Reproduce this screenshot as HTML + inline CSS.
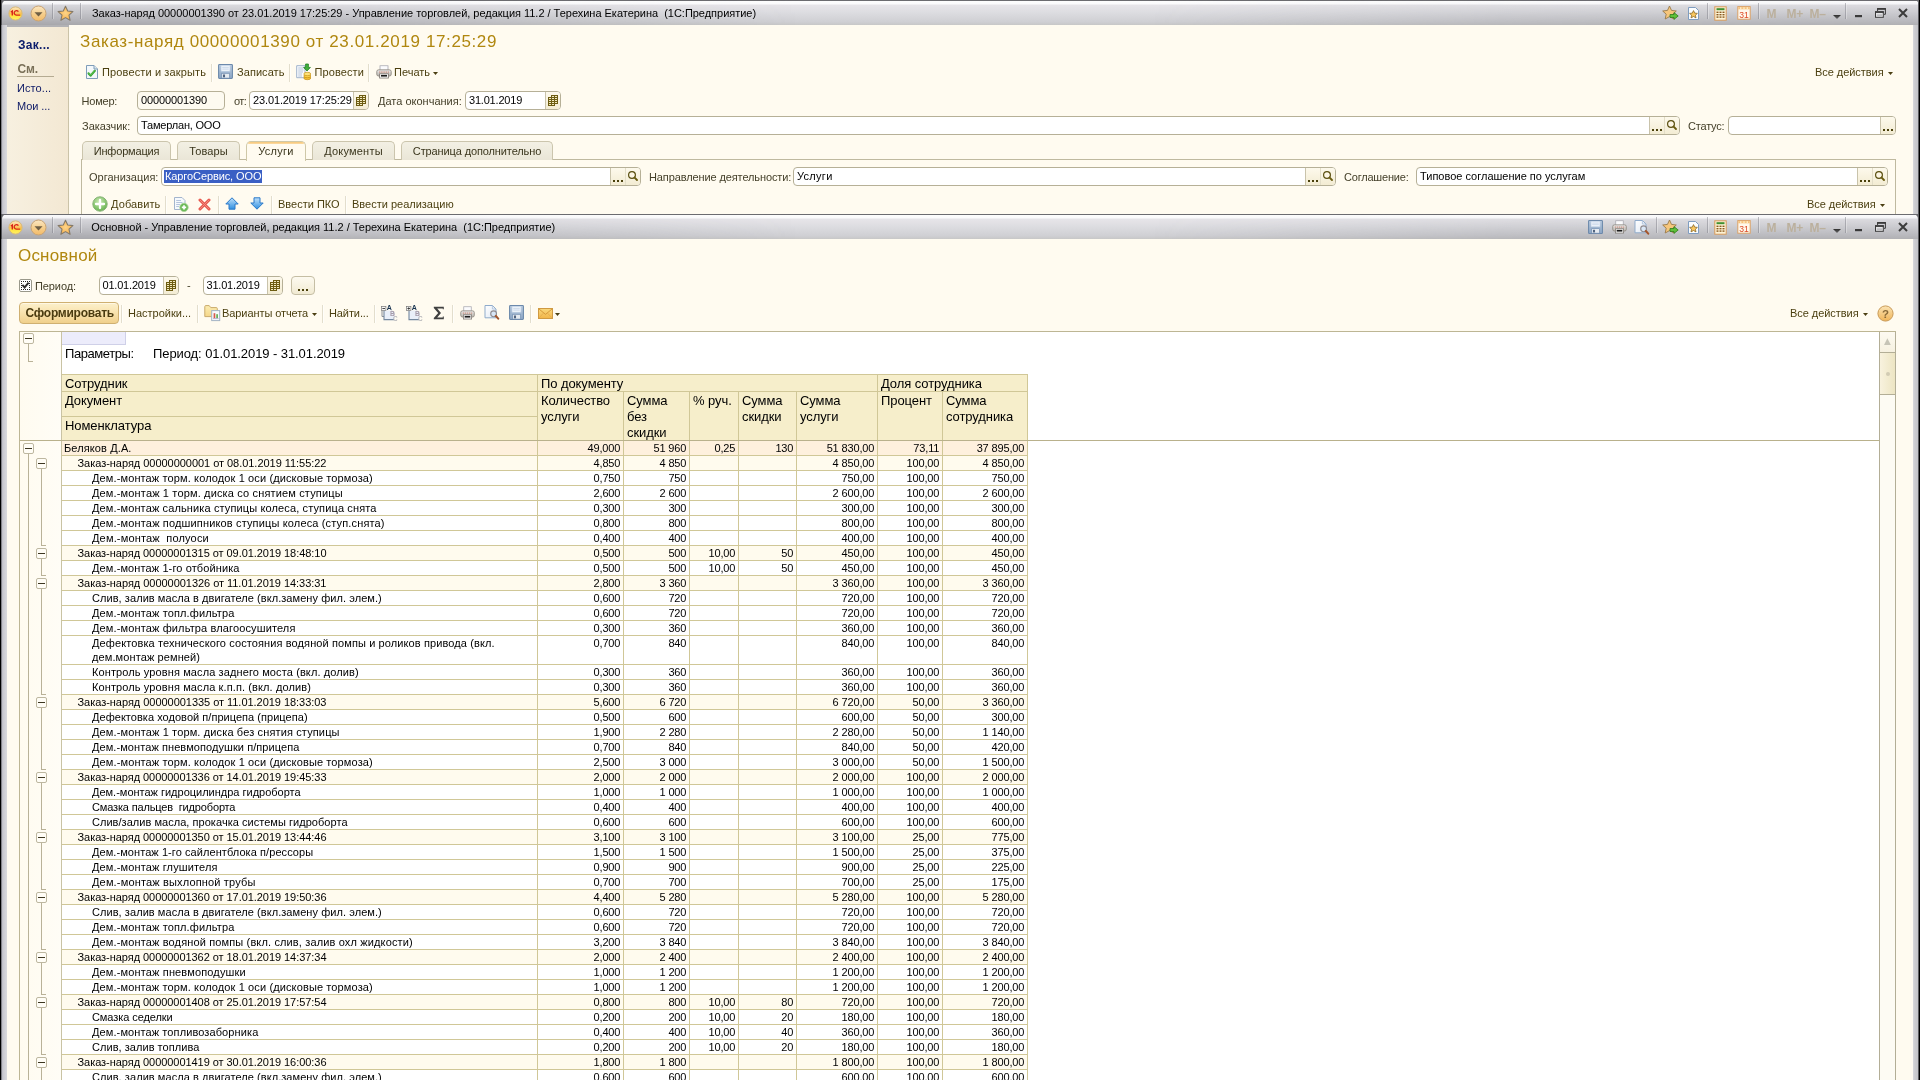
<!DOCTYPE html>
<html lang="ru"><head><meta charset="utf-8"><title>1C</title>
<style>
*{box-sizing:border-box;margin:0;padding:0}
html,body{width:1920px;height:1080px;overflow:hidden;background:#fffbf0}
body{font-family:"Liberation Sans",sans-serif;font-size:11px;color:#000;position:relative;line-height:13px}
.a{position:absolute}
.a svg{display:block}
span.a{white-space:pre}
/* window chrome */
.tb{position:absolute;left:0;width:1920px;height:25px;background:linear-gradient(#6c6c70 0,#6c6c70 1px,#fdfdfd 1px,#fbfbfc 4px,#e7e5e9 5px,#dcdce0 13px,#cfcfd3 22px,#c7c7c7 25px)}
.tb:after{content:"";position:absolute;left:0;top:0;width:1920px;height:25px;background:linear-gradient(#6c6c70 0,#6c6c70 1px,#f9f9fb 1px,#f2f2f5 4px,#d3d3d8 5px,#bebec3 13px,#a6a6ab 22px,#a0a0a5 25px);-webkit-mask-image:linear-gradient(90deg,rgba(0,0,0,.85) 0,rgba(0,0,0,.75) 150px,rgba(0,0,0,.4) 450px,rgba(0,0,0,0) 800px,rgba(0,0,0,0) 1150px,rgba(0,0,0,.4) 1500px,rgba(0,0,0,.6) 1920px);mask-image:linear-gradient(90deg,rgba(0,0,0,.85) 0,rgba(0,0,0,.75) 150px,rgba(0,0,0,.4) 450px,rgba(0,0,0,0) 800px,rgba(0,0,0,0) 1150px,rgba(0,0,0,.4) 1500px,rgba(0,0,0,.6) 1920px)}
.tbt{position:absolute;left:92px;font-size:11px;color:#000;white-space:pre;letter-spacing:-.02px}
.tsep{position:absolute;width:1px;height:16px;background:rgba(120,120,128,.45);box-shadow:1px 0 0 rgba(255,255,255,.3)}
.gm{position:absolute;font-weight:bold;font-size:12px;color:#bbb09d;white-space:pre;letter-spacing:-.3px}
/* text */
.ut{color:#4b3f10}
.lb{color:#45402a}
.big{position:absolute;font-size:17px;line-height:20px;color:#b0870f;white-space:pre}
.sep{position:absolute;width:1px;height:18px;background:#e3decd;box-shadow:1px 0 0 #fffefa}
/* inputs */
.in{position:absolute;height:19px;background:#fff;border:1px solid #b6b097;border-radius:4px;overflow:hidden}
.in .tx{position:absolute;left:3px;top:2px;white-space:pre;color:#000}
.in .bt{position:absolute;top:0;bottom:0;width:15px;border-left:1px solid #c9c3ab;background:linear-gradient(#fdf9ec,#f3ecd3)}
.in .bt svg{position:absolute}
.in .b2{border-left-color:#e3dec8}
/* tabs */
.tab{position:absolute;top:141px;height:19px;border:1px solid #cbc5ad;border-bottom:none;border-radius:5px 5px 0 0;background:linear-gradient(#f3f0e4,#eae6d7);color:#3a351c;text-align:center;line-height:18px;white-space:pre}
.tab.sel{top:141px;height:20px;background:#fffbf0;border-color:#cfc8a8;z-index:3;line-height:18px}
.tab.sel:before{content:"";position:absolute;left:1px;right:1px;top:0;height:2px;background:linear-gradient(#f7c677,#fbdca6);border-radius:3px 3px 0 0}
/* report */
.row{position:absolute;left:62px;width:965px;border-bottom:1px solid #d0c797;font-size:11px;line-height:13px}
.row span{position:absolute;top:1px;white-space:pre}
.r0{background:#fef0dd}
.r1{background:#fffbee}
.r2{background:#fff}
.t0{letter-spacing:.05px}
.t1{letter-spacing:-.04px}
.t2{letter-spacing:.12px}
.n{letter-spacing:-.14px}
.cv{position:absolute;top:375px;width:1px;background:#d0c797}
.hd{position:absolute;font-size:13px;line-height:16px;color:#000;white-space:pre;letter-spacing:-.08px}
.bx{position:absolute;width:11px;height:11px;border:1px solid #bdb7a0;border-radius:2px;background:#fffdf6}
.bx:after{content:"";position:absolute;left:1px;top:4px;width:7px;height:1px;background:#3c3620}
.vl{position:absolute;width:1px;background:#b9b298}
.hl{position:absolute;height:1px;background:#b9b298}
#root{position:absolute;left:0;top:0;width:1920px;height:1080px;will-change:transform;overflow:hidden}
</style></head><body><div id="root">

<!-- ================= WINDOW 1 ================= -->
<div class="a" style="left:0;top:0;width:1920px;height:214px;background:#fffbf0"></div>
<div class="tb" style="top:0"></div>
<div class="a" style="left:69px;top:25px;width:1844px;height:189px;background:#fffbf0"></div>
<!-- left frame & panel -->
<div class="a" style="left:0;top:25px;width:7px;height:189px;background:linear-gradient(90deg,#000 0,#000 1px,#4a4a50 1px,#b9b9c1 2px,#c9c9d0 3px,#dadade 7px)"></div>
<div class="a" style="left:0;top:0;width:2px;height:25px;background:linear-gradient(90deg,#000 0,#000 1px,#55555a 1px,#55555a 2px)"></div>
<div class="a" style="left:7px;top:25px;width:62px;height:2px;background:#b2b2b5"></div>
<div class="a" style="left:7px;top:27px;width:61px;height:187px;background:linear-gradient(90deg,#f7f0e0,#f3e8d3)"></div>
<div class="a" style="left:68px;top:27px;width:1px;height:187px;background:#cbc3a8"></div>
<!-- right frame -->
<div class="a" style="left:1913px;top:25px;width:7px;height:189px;background:linear-gradient(90deg,#d8d8dc 0,#cbcbcf 2px,#c4c4c8 5px,#5c5c60 5px,#5c5c60 6px,#000 6px)"></div>
<div class="a" style="left:1918px;top:0;width:2px;height:25px;background:linear-gradient(90deg,#5c5c60 0,#5c5c60 1px,#000 1px)"></div>
<svg class="a" style="left:2px;top:0" width="5" height="5"><path d="M0 0 H5 A5 5 0 0 0 0 5 Z" fill="#6c6c70"/></svg>
<svg class="a" style="left:1914px;top:0" width="5" height="5"><path d="M5 0 H0 A5 5 0 0 1 5 5 Z" fill="#6c6c70"/></svg>

<!-- title bar 1 -->
<div class="a" style="left:8px;top:6px"><svg width="15" height="15" viewBox="0 0 15 15"><defs><linearGradient id="g1c" x1="0" y1="0" x2="0" y2="1"><stop offset="0" stop-color="#fde9c4"/><stop offset=".5" stop-color="#fbc252"/><stop offset=".62" stop-color="#ffe23c"/><stop offset="1" stop-color="#fff266"/></linearGradient></defs>
<circle cx="7.5" cy="7.5" r="6.6" fill="url(#g1c)" stroke="#d8b878" stroke-width="1"/>
<path d="M2.9 6 L4.3 5 L4.3 9.6" fill="none" stroke="#d9241a" stroke-width="1.4"/>
<path d="M10.4 5.6 A2.3 2.3 0 1 0 8.3 9.2 L12.3 9.2" fill="none" stroke="#d9241a" stroke-width="1.3"/></svg></div>
<div class="a" style="left:29.5px;top:4.5px"><svg width="17" height="17" viewBox="0 0 17 17"><defs><linearGradient id="gdd" x1="0" y1="0" x2="0" y2="1"><stop offset="0" stop-color="#fbe8c4"/><stop offset=".5" stop-color="#f6cf8e"/><stop offset="1" stop-color="#f3bb68"/></linearGradient></defs>
<circle cx="8.5" cy="8.5" r="7.5" fill="url(#gdd)" stroke="#c9a374" stroke-width="1"/>
<path d="M4.5 7.2 L12.5 7.2 L8.5 11.6 Z" fill="#6f5f45"/></svg></div>
<div class="tsep" style="left:52px;top:3px"></div>
<div class="a" style="left:57px;top:5px"><svg width="17" height="17" viewBox="0 0 17 17"><defs><radialGradient id="gst" cx=".5" cy=".5" r=".6"><stop offset="0" stop-color="#fdd488"/><stop offset="1" stop-color="#f6ab44"/></radialGradient></defs>
<path d="M8.5 1.2 L10.7 6 L15.9 6.6 L12 10.1 L13.1 15.3 L8.5 12.6 L3.9 15.3 L5 10.1 L1.1 6.6 L6.3 6 Z" fill="url(#gst)" stroke="#857a68" stroke-width="1.1" stroke-linejoin="round"/></svg></div>
<div class="tsep" style="left:80px;top:3px"></div>
<span class="tbt" style="top:7px">Заказ-наряд 00000001390 от 23.01.2019 17:25:29 - Управление торговлей, редакция 11.2 / Терехина Екатерина  (1С:Предприятие)</span>
<div class="a" style="left:1662px;top:5px"><svg width="17" height="16" viewBox="0 0 17 16"><path d="M7.5 1 L9.5 5.4 L14.3 6 L10.8 9.2 L11.8 14 L7.5 11.6 L3.2 14 L4.2 9.2 L.7 6 L5.5 5.4 Z" fill="#f6c67c" stroke="#9a7a4a" stroke-width=".9" stroke-linejoin="round"/>
<path d="M8 9.5 H12 V7.6 L16.2 11 L12 14.4 V12.5 H8 Z" fill="#5fc03a" stroke="#2e7f1c" stroke-width=".8" stroke-linejoin="round"/></svg></div>
<div class="a" style="left:1687px;top:6px"><svg width="13" height="15" viewBox="0 0 13 15"><path d="M1.5 1.5 H8.5 L11.5 4.5 V13.5 H1.5 Z" fill="#fbfdff" stroke="#7f9dc0" stroke-width="1"/>
<path d="M6.5 4.6 L7.7 7.1 L10.4 7.4 L8.4 9.2 L9 11.9 L6.5 10.5 L4 11.9 L4.6 9.2 L2.6 7.4 L5.3 7.1 Z" fill="#f9c760" stroke="#8a6a28" stroke-width=".8" stroke-linejoin="round"/></svg></div>
<div class="tsep" style="left:1707px;top:3px"></div>
<div class="a" style="left:1714px;top:6px"><svg width="13" height="15" viewBox="0 0 13 15"><rect x=".8" y=".8" width="11.4" height="13.4" fill="#fdf3d6" stroke="#d89a5a" stroke-width="1"/>
<rect x="2.5" y="2.2" width="8" height="2" fill="#3f8f2f"/>
<g fill="#8a5a1e"><rect x="2.5" y="5.6" width="2" height="1.4"/><rect x="5.5" y="5.6" width="2" height="1.4"/><rect x="8.5" y="5.6" width="2" height="1.4"/>
<rect x="2.5" y="8" width="2" height="1.4"/><rect x="5.5" y="8" width="2" height="1.4"/><rect x="8.5" y="8" width="2" height="1.4"/>
<rect x="2.5" y="10.4" width="2" height="1.4"/><rect x="5.5" y="10.4" width="2" height="1.4"/><rect x="8.5" y="10.4" width="2" height="1.4"/></g></svg></div>
<div class="a" style="left:1737px;top:5px"><svg width="14" height="15" viewBox="0 0 14 15"><rect x=".8" y="1.6" width="12.4" height="12.6" fill="#fff8ec" stroke="#dba066" stroke-width="1"/>
<rect x="1.3" y="2.1" width="11.4" height="2.2" fill="#f6c27a"/>
<g fill="#fff3da"><rect x="3" y="2.4" width="1.4" height="1.4"/><rect x="6.3" y="2.4" width="1.4" height="1.4"/><rect x="9.6" y="2.4" width="1.4" height="1.4"/></g>
<text x="7" y="12.7" font-family="Liberation Sans, sans-serif" font-size="9.5" text-anchor="middle" fill="#dd4a26" textLength="9.6" lengthAdjust="spacingAndGlyphs">31</text></svg></div>
<div class="tsep" style="left:1758px;top:3px"></div>
<span class="gm" style="left:1766.5px;top:8px">M</span>
<span class="gm" style="left:1786.5px;top:8px">M+</span>
<span class="gm" style="left:1809.5px;top:8px">M–</span>
<div class="a" style="left:1833px;top:15px"><svg width="8" height="4" viewBox="0 0 8 4"><defs><linearGradient id="gak" x1="0" y1="0" x2="0" y2="1"><stop offset="0" stop-color="#2e2e2e"/><stop offset="1" stop-color="#6a6a6a"/></linearGradient></defs><path d="M0 0 H8 L4 4 Z" fill="url(#gak)"/></svg></div>
<div class="tsep" style="left:1845px;top:3px"></div>
<div class="a" style="left:1855px;top:15px"><svg width="7" height="3" viewBox="0 0 7 3"><rect x="0" y="0" width="7" height="2.2" fill="#3a3a3a"/></svg></div>
<div class="a" style="left:1875px;top:8px"><svg width="12" height="11" viewBox="0 0 12 11"><path d="M2.6 3 V.9 H10.4 V6.3 H9" fill="none" stroke="#3a3a3a" stroke-width="1"/><rect x="2.1" y="0" width="8.8" height="1.7" fill="#3a3a3a"/>
<rect x=".5" y="3.8" width="7.8" height="5.5" fill="#e6e6e8" stroke="#3a3a3a" stroke-width="1"/><rect x="0" y="3.3" width="8.8" height="1.6" fill="#3a3a3a"/>
<rect x="1.8" y="6.4" width="5.2" height="1.5" fill="#b9b9bd"/></svg></div>
<div class="a" style="left:1897.5px;top:7.5px"><svg width="10" height="10" viewBox="0 0 10 10"><path d="M1 1 L9 9 M9 1 L1 9" stroke="#3c3c3c" stroke-width="2"/></svg></div>

<!-- left panel items -->
<span class="a" style="left:18px;top:39px;font-size:12px;font-weight:bold;color:#0b1c6b;letter-spacing:.3px">Зак...</span>
<span class="a" style="left:17.5px;top:63px;font-size:12px;font-weight:bold;color:#7a7058;letter-spacing:-.1px">См.</span>
<div class="a" style="left:17px;top:76px;width:37px;height:1px;background:#b5ab92"></div>
<span class="a" style="left:17px;top:82px;font-size:11px;color:#0e1a66;letter-spacing:.08px">Исто...</span>
<span class="a" style="left:17px;top:100px;font-size:11px;color:#0e1a66;letter-spacing:-.09px">Мои ...</span>

<!-- doc title -->
<span class="big" style="left:80px;top:32px;letter-spacing:.62px">Заказ-наряд 00000001390 от 23.01.2019 17:25:29</span>

<!-- toolbar 1 -->
<div class="a" style="left:85px;top:64px"><svg width="14" height="15" viewBox="0 0 14 15"><path d="M1.5 1.5 H9 L12.5 5 V14.5 H1.5 Z" fill="#f4f8fb" stroke="#7f9db9" stroke-width="1"/>
<path d="M9 1.5 V5 H12.5" fill="#dde8f1" stroke="#7f9db9" stroke-width="1"/>
<path d="M3.6 9.4 L5.6 11.6 L9.8 6.8" fill="none" stroke="#2f9e2f" stroke-width="2.2" stroke-linecap="round" stroke-linejoin="round"/>
<path d="M3.8 9.2 L5.6 11.2 L9.6 6.6" fill="none" stroke="#74d45e" stroke-width=".9" stroke-linecap="round" stroke-linejoin="round"/></svg></div>
<span class="a ut" style="left:102px;top:66px;letter-spacing:.13px">Провести и закрыть</span>
<div class="sep" style="left:211px;top:64px"></div>
<div class="a" style="left:218px;top:64px"><svg width="15" height="15" viewBox="0 0 16 16" preserveAspectRatio="none"><defs><linearGradient id="gsv" x1="0" y1="0" x2="0" y2="1"><stop offset="0" stop-color="#b9cade"/><stop offset="1" stop-color="#8ba5c4"/></linearGradient></defs>
<rect x=".6" y=".6" width="14.8" height="14.8" rx=".9" fill="url(#gsv)" stroke="#6c89ab" stroke-width="1.1"/>
<rect x="3.3" y="1.6" width="9.4" height="6" fill="#f3f7fc" stroke="#c5d5e8" stroke-width=".6"/>
<path d="M4.5 3.5 H11.5 M4.5 5.4 H11.5" stroke="#b7cae2" stroke-width=".8"/>
<rect x="4" y="10" width="8.2" height="5" fill="#e6ebf1" stroke="#6785ab" stroke-width=".6"/>
<rect x="5.3" y="11.2" width="2.2" height="3" fill="#50637f"/></svg></div>
<span class="a ut" style="left:237px;top:66px;letter-spacing:.06px">Записать</span>
<div class="sep" style="left:289px;top:64px"></div>
<div class="a" style="left:295px;top:63px"><svg width="17" height="18" viewBox="0 0 17 18"><path d="M1.7 2.7 H10 V14.7 H1.7 Z" fill="#fafcfe" stroke="#9fb2cc" stroke-width="1"/>
<path d="M3.2 5 H8.5 M3.2 7 H8.5 M3.2 9 H8 M3.2 11 H7 M3.2 13 H7" stroke="#b3c3da" stroke-width="1"/>
<path d="M10.6 1 H13.4 V4.4 H15.4 L12 8 L8.6 4.4 H10.6 Z" fill="#43b03c" stroke="#1f8224" stroke-width=".8" stroke-linejoin="round"/>
<ellipse cx="12.3" cy="15" rx="3.5" ry="1.7" fill="#f3bf34" stroke="#c48e12" stroke-width=".7"/>
<ellipse cx="12.3" cy="13" rx="3.5" ry="1.7" fill="#f8d04a" stroke="#c48e12" stroke-width=".7"/>
<ellipse cx="12.3" cy="11" rx="3.5" ry="1.7" fill="#fde27a" stroke="#c9951a" stroke-width=".7"/></svg></div>
<span class="a ut" style="left:314.5px;top:66px;letter-spacing:.1px">Провести</span>
<div class="sep" style="left:368px;top:64px"></div>
<div class="a" style="left:376px;top:65px"><svg width="16" height="14" viewBox="0 0 16 15" preserveAspectRatio="none"><defs><linearGradient id="gpr3" x1="0" y1="0" x2="0" y2="1"><stop offset="0" stop-color="#efefef"/><stop offset="1" stop-color="#b9b4ad"/></linearGradient></defs>
<rect x="4" y=".8" width="8" height="5.4" fill="#fbfbfd" stroke="#a6a6ae" stroke-width=".8"/>
<rect x=".8" y="5.2" width="14.4" height="6.6" rx="1.8" fill="url(#gpr3)" stroke="#8b857c" stroke-width=".9"/>
<path d="M3 7.6 H13" stroke="#c77c6a" stroke-width="1" stroke-dasharray="1.4 .8"/>
<rect x="3.6" y="9.4" width="8.8" height="4.6" fill="#f2f2f2" stroke="#7c7670" stroke-width=".8"/>
<rect x="5" y="10.6" width="6" height="1.8" fill="#1a1a1a"/></svg></div>
<span class="a ut" style="left:394px;top:66px">Печать</span>
<div class="a" style="left:433px;top:72px"><svg width="5" height="3" viewBox="0 0 5 3"><path d="M0 0 H5 L2.5 3 Z" fill="#4b3f12"/></svg></div>
<span class="a ut" style="left:1815px;top:66px;letter-spacing:-.05px">Все действия</span>
<div class="a" style="left:1888px;top:72px"><svg width="5" height="3" viewBox="0 0 5 3"><path d="M0 0 H5 L2.5 3 Z" fill="#4b3f12"/></svg></div>

<!-- row: number -->
<span class="a lb" style="left:81.5px;top:95px;letter-spacing:-.2px">Номер:</span>
<div class="in" style="left:137px;top:91px;width:88px;background:#fdfaf0"><span class="tx" style="letter-spacing:-.12px">00000001390</span></div>
<span class="a lb" style="left:234px;top:95px;letter-spacing:-.6px">от:</span>
<div class="in" style="left:249px;top:91px;width:120px"><span class="tx" style="letter-spacing:-.12px">23.01.2019 17:25:29</span><div class="bt" style="right:0"><div class="a" style="left:2px;top:3px"><svg width="10" height="11" viewBox="0 0 10 11"><path d="M3 0 H10 V9 H7 V11 H0 V2 H3 Z" fill="#6d5c12"/>
<g fill="#f3ebc0"><rect x="4" y="1" width="2" height="1"/><rect x="7" y="1" width="2" height="1"/>
<rect x="1" y="3" width="2" height="1"/><rect x="4" y="3" width="2" height="1"/><rect x="7" y="3" width="2" height="1"/>
<rect x="1" y="5" width="2" height="1"/><rect x="4" y="5" width="2" height="1"/><rect x="7" y="5" width="2" height="1"/>
<rect x="1" y="7" width="2" height="1"/><rect x="4" y="7" width="2" height="1"/><rect x="7" y="7" width="2" height="1"/>
<rect x="1" y="9" width="2" height="1"/><rect x="4" y="9" width="2" height="1"/></g></svg></div></div></div>
<span class="a lb" style="left:378px;top:95px">Дата окончания:</span>
<div class="in" style="left:465px;top:91px;width:96px"><span class="tx" style="letter-spacing:-.2px">31.01.2019</span><div class="bt" style="right:0"><div class="a" style="left:2px;top:3px"><svg width="10" height="11" viewBox="0 0 10 11"><path d="M3 0 H10 V9 H7 V11 H0 V2 H3 Z" fill="#6d5c12"/>
<g fill="#f3ebc0"><rect x="4" y="1" width="2" height="1"/><rect x="7" y="1" width="2" height="1"/>
<rect x="1" y="3" width="2" height="1"/><rect x="4" y="3" width="2" height="1"/><rect x="7" y="3" width="2" height="1"/>
<rect x="1" y="5" width="2" height="1"/><rect x="4" y="5" width="2" height="1"/><rect x="7" y="5" width="2" height="1"/>
<rect x="1" y="7" width="2" height="1"/><rect x="4" y="7" width="2" height="1"/><rect x="7" y="7" width="2" height="1"/>
<rect x="1" y="9" width="2" height="1"/><rect x="4" y="9" width="2" height="1"/></g></svg></div></div></div>

<!-- row: customer -->
<span class="a lb" style="left:82px;top:120px">Заказчик:</span>
<div class="in" style="left:137px;top:116px;width:1543px"><span class="tx" style="letter-spacing:-.2px">Тамерлан, ООО</span><div class="bt" style="right:15px"><div class="a" style="left:2px;top:12px"><svg width="10" height="2" viewBox="0 0 10 2"><g fill="#4a400a"><rect x="0" y="0" width="2" height="2"/><rect x="4" y="0" width="2" height="2"/><rect x="8" y="0" width="2" height="2"/></g></svg></div></div><div class="bt b2" style="right:0"><div class="a" style="left:1px;top:2px"><svg width="12" height="12" viewBox="0 0 12 12"><circle cx="5" cy="5" r="3.4" fill="#fdf6e4" stroke="#5a4f10" stroke-width="1.2"/>
<path d="M7.6 7.6 L10 10" stroke="#6a5c10" stroke-width="1.9" stroke-linecap="round"/></svg></div></div></div>
<span class="a lb" style="left:1688px;top:120px;letter-spacing:-.2px">Статус:</span>
<div class="in" style="left:1728px;top:116px;width:168px"><div class="bt" style="right:0"><div class="a" style="left:2px;top:12px"><svg width="10" height="2" viewBox="0 0 10 2"><g fill="#4a400a"><rect x="0" y="0" width="2" height="2"/><rect x="4" y="0" width="2" height="2"/><rect x="8" y="0" width="2" height="2"/></g></svg></div></div></div>

<!-- tabs -->
<div class="a" style="left:81px;top:159px;width:1815px;height:56px;border:1px solid #bfb99f;border-bottom:none;background:#fffbf0"></div>
<div class="tab" style="left:82px;width:89px;letter-spacing:-.18px">Информация</div>
<div class="tab" style="left:177px;width:63px;letter-spacing:.15px">Товары</div>
<div class="tab sel" style="left:246px;width:60px;letter-spacing:.3px">Услуги</div>
<div class="tab" style="left:312px;width:83px;letter-spacing:.2px">Документы</div>
<div class="tab" style="left:401px;width:152px;letter-spacing:-.12px">Страница дополнительно</div>

<!-- tab content -->
<span class="a lb" style="left:89px;top:171px">Организация:</span>
<div class="in" style="left:161px;top:167px;width:480px"><div class="a" style="left:2px;top:2px;width:98px;height:13px;background:#3a5fc4"></div><span class="tx" style="color:#fff;letter-spacing:-.1px">КаргоСервис, ООО</span><div class="bt" style="right:15px"><div class="a" style="left:2px;top:12px"><svg width="10" height="2" viewBox="0 0 10 2"><g fill="#4a400a"><rect x="0" y="0" width="2" height="2"/><rect x="4" y="0" width="2" height="2"/><rect x="8" y="0" width="2" height="2"/></g></svg></div></div><div class="bt b2" style="right:0"><div class="a" style="left:1px;top:2px"><svg width="12" height="12" viewBox="0 0 12 12"><circle cx="5" cy="5" r="3.4" fill="#fdf6e4" stroke="#5a4f10" stroke-width="1.2"/>
<path d="M7.6 7.6 L10 10" stroke="#6a5c10" stroke-width="1.9" stroke-linecap="round"/></svg></div></div></div>
<span class="a lb" style="left:649px;top:171px;letter-spacing:-.11px">Направление деятельности:</span>
<div class="in" style="left:793px;top:167px;width:543px"><span class="tx" style="letter-spacing:.3px">Услуги</span><div class="bt" style="right:15px"><div class="a" style="left:2px;top:12px"><svg width="10" height="2" viewBox="0 0 10 2"><g fill="#4a400a"><rect x="0" y="0" width="2" height="2"/><rect x="4" y="0" width="2" height="2"/><rect x="8" y="0" width="2" height="2"/></g></svg></div></div><div class="bt b2" style="right:0"><div class="a" style="left:1px;top:2px"><svg width="12" height="12" viewBox="0 0 12 12"><circle cx="5" cy="5" r="3.4" fill="#fdf6e4" stroke="#5a4f10" stroke-width="1.2"/>
<path d="M7.6 7.6 L10 10" stroke="#6a5c10" stroke-width="1.9" stroke-linecap="round"/></svg></div></div></div>
<span class="a lb" style="left:1344px;top:171px;letter-spacing:-.2px">Соглашение:</span>
<div class="in" style="left:1416px;top:167px;width:472px"><span class="tx">Типовое соглашение по услугам</span><div class="bt" style="right:15px"><div class="a" style="left:2px;top:12px"><svg width="10" height="2" viewBox="0 0 10 2"><g fill="#4a400a"><rect x="0" y="0" width="2" height="2"/><rect x="4" y="0" width="2" height="2"/><rect x="8" y="0" width="2" height="2"/></g></svg></div></div><div class="bt b2" style="right:0"><div class="a" style="left:1px;top:2px"><svg width="12" height="12" viewBox="0 0 12 12"><circle cx="5" cy="5" r="3.4" fill="#fdf6e4" stroke="#5a4f10" stroke-width="1.2"/>
<path d="M7.6 7.6 L10 10" stroke="#6a5c10" stroke-width="1.9" stroke-linecap="round"/></svg></div></div></div>

<!-- toolbar 2 -->
<div class="a" style="left:92px;top:196px"><svg width="16" height="16" viewBox="0 0 16 16"><defs><radialGradient id="gad" cx=".45" cy=".35" r=".75"><stop offset="0" stop-color="#cfeab8"/><stop offset=".6" stop-color="#86c56e"/><stop offset="1" stop-color="#5aa846"/></radialGradient></defs>
<circle cx="8" cy="8" r="7.2" fill="url(#gad)" stroke="#86b276" stroke-width="1"/>
<path d="M8 4 V12 M4 8 H12" stroke="#ffffff" stroke-width="2.3" stroke-linecap="round"/></svg></div>
<span class="a ut" style="left:111px;top:198px;letter-spacing:.1px">Добавить</span>
<div class="sep" style="left:165px;top:196px"></div>
<div class="a" style="left:173px;top:196px"><svg width="16" height="16" viewBox="0 0 16 16"><path d="M1.5 1.5 H9 L12 4.5 V13.5 H1.5 Z" fill="#f6f9fc" stroke="#a3b5cd" stroke-width="1"/>
<path d="M3.2 4.5 H8 M3.2 6.5 H9.5 M3.2 8.5 H7 M3.2 10.5 H6" stroke="#b4c4dc" stroke-width="1"/>
<circle cx="11" cy="11.4" r="4.2" fill="#6dba58" stroke="#a4d094" stroke-width=".8"/>
<path d="M11 9.2 V13.6 M8.8 11.4 H13.2" stroke="#fff" stroke-width="1.7"/></svg></div>
<div class="a" style="left:198px;top:198px"><svg width="13" height="13" viewBox="0 0 13 13"><path d="M2 2 L11 11 M11 2 L2 11" stroke="#e8574d" stroke-width="3" stroke-linecap="round"/>
<path d="M2 2 L11 11 M11 2 L2 11" stroke="#f08a80" stroke-width="1" stroke-linecap="round"/></svg></div>
<div class="sep" style="left:218px;top:196px"></div>
<div class="a" style="left:225px;top:197px"><svg width="14" height="13" viewBox="0 0 14 13"><defs><linearGradient id="gup" x1="0" y1="0" x2="0" y2="1"><stop offset="0" stop-color="#bfe0fb"/><stop offset="1" stop-color="#2f8fe0"/></linearGradient></defs>
<path d="M7 .8 L13.2 7 H10 V12.2 H4 V7 H.8 Z" fill="url(#gup)" stroke="#2a79c8" stroke-width="1" stroke-linejoin="round"/></svg></div>
<div class="a" style="left:250px;top:197px"><svg width="14" height="13" viewBox="0 0 14 13"><defs><linearGradient id="gdn" x1="0" y1="0" x2="0" y2="1"><stop offset="0" stop-color="#bfe0fb"/><stop offset="1" stop-color="#2f8fe0"/></linearGradient></defs>
<path d="M7 12.2 L13.2 6 H10 V.8 H4 V6 H.8 Z" fill="url(#gdn)" stroke="#2a79c8" stroke-width="1" stroke-linejoin="round"/></svg></div>
<div class="sep" style="left:271px;top:196px"></div>
<span class="a ut" style="left:278px;top:198px">Ввести ПКО</span>
<div class="sep" style="left:345px;top:196px"></div>
<span class="a ut" style="left:352px;top:198px">Ввести реализацию</span>
<span class="a ut" style="left:1807px;top:198px;letter-spacing:-.05px">Все действия</span>
<div class="a" style="left:1880px;top:204px"><svg width="5" height="3" viewBox="0 0 5 3"><path d="M0 0 H5 L2.5 3 Z" fill="#4b3f12"/></svg></div>

<!-- ================= WINDOW 2 ================= -->
<div class="a" style="left:0;top:214px;width:1920px;height:866px;background:#fffbf0"></div>
<div class="tb" style="top:214px"></div>
<div class="a" style="left:0;top:239px;width:7px;height:841px;background:linear-gradient(90deg,#000 0,#000 1px,#4a4a50 1px,#b9b9c1 2px,#c9c9d0 3px,#dadade 7px)"></div>
<div class="a" style="left:0;top:214px;width:2px;height:25px;background:linear-gradient(90deg,#000 0,#000 1px,#55555a 1px,#55555a 2px)"></div>
<div class="a" style="left:1913px;top:239px;width:7px;height:841px;background:linear-gradient(90deg,#d8d8dc 0,#cbcbcf 2px,#c4c4c8 5px,#5c5c60 5px,#5c5c60 6px,#000 6px)"></div>
<div class="a" style="left:1918px;top:214px;width:2px;height:25px;background:linear-gradient(90deg,#5c5c60 0,#5c5c60 1px,#000 1px)"></div>
<svg class="a" style="left:2px;top:214px" width="5" height="5"><path d="M0 0 H5 A5 5 0 0 0 0 5 Z" fill="#6c6c70"/></svg>
<svg class="a" style="left:1913px;top:214px" width="5" height="5"><path d="M5 0 H0 A5 5 0 0 1 5 5 Z" fill="#6c6c70"/></svg>

<!-- title bar 2 -->
<div class="a" style="left:8px;top:220px"><svg width="15" height="15" viewBox="0 0 15 15"><defs><linearGradient id="g1c" x1="0" y1="0" x2="0" y2="1"><stop offset="0" stop-color="#fde9c4"/><stop offset=".5" stop-color="#fbc252"/><stop offset=".62" stop-color="#ffe23c"/><stop offset="1" stop-color="#fff266"/></linearGradient></defs>
<circle cx="7.5" cy="7.5" r="6.6" fill="url(#g1c)" stroke="#d8b878" stroke-width="1"/>
<path d="M2.9 6 L4.3 5 L4.3 9.6" fill="none" stroke="#d9241a" stroke-width="1.4"/>
<path d="M10.4 5.6 A2.3 2.3 0 1 0 8.3 9.2 L12.3 9.2" fill="none" stroke="#d9241a" stroke-width="1.3"/></svg></div>
<div class="a" style="left:29.5px;top:218.5px"><svg width="17" height="17" viewBox="0 0 17 17"><defs><linearGradient id="gdd" x1="0" y1="0" x2="0" y2="1"><stop offset="0" stop-color="#fbe8c4"/><stop offset=".5" stop-color="#f6cf8e"/><stop offset="1" stop-color="#f3bb68"/></linearGradient></defs>
<circle cx="8.5" cy="8.5" r="7.5" fill="url(#gdd)" stroke="#c9a374" stroke-width="1"/>
<path d="M4.5 7.2 L12.5 7.2 L8.5 11.6 Z" fill="#6f5f45"/></svg></div>
<div class="tsep" style="left:52px;top:217px"></div>
<div class="a" style="left:57px;top:219px"><svg width="17" height="17" viewBox="0 0 17 17"><defs><radialGradient id="gst" cx=".5" cy=".5" r=".6"><stop offset="0" stop-color="#fdd488"/><stop offset="1" stop-color="#f6ab44"/></radialGradient></defs>
<path d="M8.5 1.2 L10.7 6 L15.9 6.6 L12 10.1 L13.1 15.3 L8.5 12.6 L3.9 15.3 L5 10.1 L1.1 6.6 L6.3 6 Z" fill="url(#gst)" stroke="#857a68" stroke-width="1.1" stroke-linejoin="round"/></svg></div>
<div class="tsep" style="left:80px;top:217px"></div>
<span class="tbt" style="top:221px;left:91.3px">Основной - Управление торговлей, редакция 11.2 / Терехина Екатерина  (1С:Предприятие)</span>
<div class="a" style="left:1588px;top:219.5px"><svg width="15" height="14" viewBox="0 0 16 16" preserveAspectRatio="none"><defs><linearGradient id="gsv" x1="0" y1="0" x2="0" y2="1"><stop offset="0" stop-color="#b9cade"/><stop offset="1" stop-color="#8ba5c4"/></linearGradient></defs>
<rect x=".6" y=".6" width="14.8" height="14.8" rx=".9" fill="url(#gsv)" stroke="#6c89ab" stroke-width="1.1"/>
<rect x="3.3" y="1.6" width="9.4" height="6" fill="#f3f7fc" stroke="#c5d5e8" stroke-width=".6"/>
<path d="M4.5 3.5 H11.5 M4.5 5.4 H11.5" stroke="#b7cae2" stroke-width=".8"/>
<rect x="4" y="10" width="8.2" height="5" fill="#e6ebf1" stroke="#6785ab" stroke-width=".6"/>
<rect x="5.3" y="11.2" width="2.2" height="3" fill="#50637f"/></svg></div>
<div class="a" style="left:1612px;top:220px"><svg width="15" height="14" viewBox="0 0 16 15" preserveAspectRatio="none"><defs><linearGradient id="gpr2" x1="0" y1="0" x2="0" y2="1"><stop offset="0" stop-color="#efefef"/><stop offset="1" stop-color="#b9b4ad"/></linearGradient></defs>
<rect x="4" y=".8" width="8" height="5.4" fill="#fbfbfd" stroke="#a6a6ae" stroke-width=".8"/>
<rect x=".8" y="5.2" width="14.4" height="6.6" rx="1.8" fill="url(#gpr2)" stroke="#8b857c" stroke-width=".9"/>
<path d="M3 7.6 H13" stroke="#c77c6a" stroke-width="1" stroke-dasharray="1.4 .8"/>
<rect x="3.6" y="9.4" width="8.8" height="4.6" fill="#f2f2f2" stroke="#7c7670" stroke-width=".8"/>
<rect x="5" y="10.6" width="6" height="1.8" fill="#1a1a1a"/></svg></div>
<div class="a" style="left:1634px;top:219px"><svg width="16" height="16" viewBox="0 0 16 16"><defs><linearGradient id="gpv" x1="0" y1="0" x2="1" y2="1"><stop offset="0" stop-color="#ffffff"/><stop offset="1" stop-color="#dfe8f4"/></linearGradient></defs>
<path d="M1 1.5 H8.4 L12 5 V13.8 H1 Z" fill="url(#gpv)" stroke="#8fabcb" stroke-width="1"/>
<path d="M8.4 1.5 V5 H12" fill="none" stroke="#a9bfd9" stroke-width=".8"/>
<circle cx="9.6" cy="9.8" r="2.9" fill="#d6e4f5" fill-opacity=".9" stroke="#8e8a8e" stroke-width="1.1"/>
<path d="M11.9 12 L14.2 14.6" stroke="#a5562c" stroke-width="2.1" stroke-linecap="round"/></svg></div>
<div class="tsep" style="left:1656px;top:217px"></div>
<div class="a" style="left:1662px;top:219px"><svg width="17" height="16" viewBox="0 0 17 16"><path d="M7.5 1 L9.5 5.4 L14.3 6 L10.8 9.2 L11.8 14 L7.5 11.6 L3.2 14 L4.2 9.2 L.7 6 L5.5 5.4 Z" fill="#f6c67c" stroke="#9a7a4a" stroke-width=".9" stroke-linejoin="round"/>
<path d="M8 9.5 H12 V7.6 L16.2 11 L12 14.4 V12.5 H8 Z" fill="#5fc03a" stroke="#2e7f1c" stroke-width=".8" stroke-linejoin="round"/></svg></div>
<div class="a" style="left:1687px;top:220px"><svg width="13" height="15" viewBox="0 0 13 15"><path d="M1.5 1.5 H8.5 L11.5 4.5 V13.5 H1.5 Z" fill="#fbfdff" stroke="#7f9dc0" stroke-width="1"/>
<path d="M6.5 4.6 L7.7 7.1 L10.4 7.4 L8.4 9.2 L9 11.9 L6.5 10.5 L4 11.9 L4.6 9.2 L2.6 7.4 L5.3 7.1 Z" fill="#f9c760" stroke="#8a6a28" stroke-width=".8" stroke-linejoin="round"/></svg></div>
<div class="tsep" style="left:1707px;top:217px"></div>
<div class="a" style="left:1714px;top:220px"><svg width="13" height="15" viewBox="0 0 13 15"><rect x=".8" y=".8" width="11.4" height="13.4" fill="#fdf3d6" stroke="#d89a5a" stroke-width="1"/>
<rect x="2.5" y="2.2" width="8" height="2" fill="#3f8f2f"/>
<g fill="#8a5a1e"><rect x="2.5" y="5.6" width="2" height="1.4"/><rect x="5.5" y="5.6" width="2" height="1.4"/><rect x="8.5" y="5.6" width="2" height="1.4"/>
<rect x="2.5" y="8" width="2" height="1.4"/><rect x="5.5" y="8" width="2" height="1.4"/><rect x="8.5" y="8" width="2" height="1.4"/>
<rect x="2.5" y="10.4" width="2" height="1.4"/><rect x="5.5" y="10.4" width="2" height="1.4"/><rect x="8.5" y="10.4" width="2" height="1.4"/></g></svg></div>
<div class="a" style="left:1737px;top:219px"><svg width="14" height="15" viewBox="0 0 14 15"><rect x=".8" y="1.6" width="12.4" height="12.6" fill="#fff8ec" stroke="#dba066" stroke-width="1"/>
<rect x="1.3" y="2.1" width="11.4" height="2.2" fill="#f6c27a"/>
<g fill="#fff3da"><rect x="3" y="2.4" width="1.4" height="1.4"/><rect x="6.3" y="2.4" width="1.4" height="1.4"/><rect x="9.6" y="2.4" width="1.4" height="1.4"/></g>
<text x="7" y="12.7" font-family="Liberation Sans, sans-serif" font-size="9.5" text-anchor="middle" fill="#dd4a26" textLength="9.6" lengthAdjust="spacingAndGlyphs">31</text></svg></div>
<div class="tsep" style="left:1758px;top:217px"></div>
<span class="gm" style="left:1766.5px;top:222px">M</span>
<span class="gm" style="left:1786.5px;top:222px">M+</span>
<span class="gm" style="left:1809.5px;top:222px">M–</span>
<div class="a" style="left:1833px;top:229px"><svg width="8" height="4" viewBox="0 0 8 4"><defs><linearGradient id="gak" x1="0" y1="0" x2="0" y2="1"><stop offset="0" stop-color="#2e2e2e"/><stop offset="1" stop-color="#6a6a6a"/></linearGradient></defs><path d="M0 0 H8 L4 4 Z" fill="url(#gak)"/></svg></div>
<div class="tsep" style="left:1845px;top:217px"></div>
<div class="a" style="left:1855px;top:229px"><svg width="7" height="3" viewBox="0 0 7 3"><rect x="0" y="0" width="7" height="2.2" fill="#3a3a3a"/></svg></div>
<div class="a" style="left:1875px;top:222px"><svg width="12" height="11" viewBox="0 0 12 11"><path d="M2.6 3 V.9 H10.4 V6.3 H9" fill="none" stroke="#3a3a3a" stroke-width="1"/><rect x="2.1" y="0" width="8.8" height="1.7" fill="#3a3a3a"/>
<rect x=".5" y="3.8" width="7.8" height="5.5" fill="#e6e6e8" stroke="#3a3a3a" stroke-width="1"/><rect x="0" y="3.3" width="8.8" height="1.6" fill="#3a3a3a"/>
<rect x="1.8" y="6.4" width="5.2" height="1.5" fill="#b9b9bd"/></svg></div>
<div class="a" style="left:1897.5px;top:221.5px"><svg width="10" height="10" viewBox="0 0 10 10"><path d="M1 1 L9 9 M9 1 L1 9" stroke="#3c3c3c" stroke-width="2"/></svg></div>

<!-- title -->
<span class="big" style="left:18px;top:246px;letter-spacing:.2px">Основной</span>

<!-- period row -->
<div class="a" style="left:19px;top:279px;width:13px;height:13px;border:1px solid #99988a;background:#fff;border-radius:2px"><svg width="11" height="11" viewBox="0 0 11 11" shape-rendering="crispEdges"><path d="M1 1.5 H10 M1 9.5 H10" stroke="#222" stroke-width="1" stroke-dasharray="1 1"/><path d="M1.5 1 V10 M9.5 1 V10" stroke="#222" stroke-width="1" stroke-dasharray="1 1"/></svg><svg style="position:absolute;left:0;top:0" width="11" height="11" viewBox="0 0 11 11"><path d="M2.4 4.8 L4.6 7.4 L8.6 2.6" fill="none" stroke="#2a2a2a" stroke-width="1.9"/></svg></div>
<span class="a lb" style="left:35px;top:280px;letter-spacing:-.1px">Период:</span>
<div class="in" style="left:99px;top:276px;width:80px"><span class="tx" style="left:2.5px;letter-spacing:-.2px">01.01.2019</span><div class="bt" style="right:0"><div class="a" style="left:2px;top:3px"><svg width="10" height="11" viewBox="0 0 10 11"><path d="M3 0 H10 V9 H7 V11 H0 V2 H3 Z" fill="#6d5c12"/>
<g fill="#f3ebc0"><rect x="4" y="1" width="2" height="1"/><rect x="7" y="1" width="2" height="1"/>
<rect x="1" y="3" width="2" height="1"/><rect x="4" y="3" width="2" height="1"/><rect x="7" y="3" width="2" height="1"/>
<rect x="1" y="5" width="2" height="1"/><rect x="4" y="5" width="2" height="1"/><rect x="7" y="5" width="2" height="1"/>
<rect x="1" y="7" width="2" height="1"/><rect x="4" y="7" width="2" height="1"/><rect x="7" y="7" width="2" height="1"/>
<rect x="1" y="9" width="2" height="1"/><rect x="4" y="9" width="2" height="1"/></g></svg></div></div></div>
<span class="a lb" style="left:187px;top:279px">-</span>
<div class="in" style="left:203px;top:276px;width:80px"><span class="tx" style="left:2.5px;letter-spacing:-.2px">31.01.2019</span><div class="bt" style="right:0"><div class="a" style="left:2px;top:3px"><svg width="10" height="11" viewBox="0 0 10 11"><path d="M3 0 H10 V9 H7 V11 H0 V2 H3 Z" fill="#6d5c12"/>
<g fill="#f3ebc0"><rect x="4" y="1" width="2" height="1"/><rect x="7" y="1" width="2" height="1"/>
<rect x="1" y="3" width="2" height="1"/><rect x="4" y="3" width="2" height="1"/><rect x="7" y="3" width="2" height="1"/>
<rect x="1" y="5" width="2" height="1"/><rect x="4" y="5" width="2" height="1"/><rect x="7" y="5" width="2" height="1"/>
<rect x="1" y="7" width="2" height="1"/><rect x="4" y="7" width="2" height="1"/><rect x="7" y="7" width="2" height="1"/>
<rect x="1" y="9" width="2" height="1"/><rect x="4" y="9" width="2" height="1"/></g></svg></div></div></div>
<div class="a" style="left:291px;top:276px;width:24px;height:19px;border:1px solid #c5bea4;border-radius:4px;background:linear-gradient(#fdfaf0,#f1ead2)"><div class="a" style="left:6px;top:12px"><svg width="10" height="2" viewBox="0 0 10 2"><g fill="#4a400a"><rect x="0" y="0" width="2" height="2"/><rect x="4" y="0" width="2" height="2"/><rect x="8" y="0" width="2" height="2"/></g></svg></div></div>

<!-- report toolbar -->
<div class="a" style="left:19px;top:302px;width:100px;height:22px;border:1px solid #cfb071;border-radius:4px;background:linear-gradient(#fcf0cc 0,#f9e4b0 45%,#f0d08c 100%);box-shadow:inset 0 1px 0 #fff8e4"></div>
<span class="a" style="left:25.5px;top:306px;font-weight:bold;font-size:12px;color:#4a3b10;letter-spacing:-.25px;line-height:14px">Сформировать</span>
<div class="sep" style="left:121px;top:305px"></div>
<span class="a ut" style="left:128px;top:307px">Настройки...</span>
<div class="sep" style="left:197px;top:305px"></div>
<div class="a" style="left:204px;top:305px"><svg width="17" height="17" viewBox="0 0 17 17"><defs><linearGradient id="gfo" x1="0" y1="0" x2="0" y2="1"><stop offset="0" stop-color="#fcedb2"/><stop offset="1" stop-color="#f5d78a"/></linearGradient></defs>
<path d="M.8 1.6 Q.8 .6 1.8 .6 H5.2 L6.8 2.6 H12.4 Q13.3 2.6 13.3 3.6 V11.6 H.8 Z" fill="url(#gfo)" stroke="#c9aa6c" stroke-width="1"/>
<rect x="7.7" y="5.6" width="8" height="10" fill="#f8fbfd" stroke="#a3b3c4" stroke-width="1"/>
<rect x="9.6" y="8.2" width="1.7" height="5" fill="#d9594a"/><rect x="12.3" y="9.2" width="1.6" height="4" fill="#58a84a"/>
<path d="M9 13.6 H14.6" stroke="#a9a0c8" stroke-width=".8"/></svg></div>
<span class="a ut" style="left:222px;top:307px;letter-spacing:-.08px">Варианты отчета</span>
<div class="a" style="left:312px;top:313px"><svg width="5" height="3" viewBox="0 0 5 3"><path d="M0 0 H5 L2.5 3 Z" fill="#4b3f12"/></svg></div>
<div class="sep" style="left:322px;top:305px"></div>
<span class="a ut" style="left:329px;top:307px;letter-spacing:-.1px">Найти...</span>
<div class="sep" style="left:374px;top:305px"></div>
<div class="a" style="left:381px;top:305px"><svg width="17" height="17" viewBox="0 0 17 17"><path d="M1 5.5 V11.5 H3" fill="none" stroke="#8a8f98" stroke-width="1"/>
<path d="M3 5.5 H10.8 L13.6 8.6 V14.6 H3 Z" fill="#e9eff9"/>
<path d="M3 5.5 V14.6 H13" fill="none" stroke="#74889f" stroke-width="1.1"/>
<path d="M10.8 5.5 L13.6 8.6" stroke="#b0bccb" stroke-width="1"/>
<rect x=".5" y="1.5" width="4.4" height="4" fill="#f7f7f7" stroke="#777" stroke-width=".7"/><path d="M1.4 3.5 H4" stroke="#333" stroke-width=".9"/>
<text x="5.8" y="4.9" font-family="Liberation Sans, sans-serif" font-size="7" font-weight="bold" fill="#17324f">A</text>
<text x="9" y="10.9" font-family="Liberation Sans, sans-serif" font-size="6.8" font-weight="bold" fill="#a79ba9">B</text>
<text x="12" y="15.9" font-family="Liberation Sans, sans-serif" font-size="6.4" font-weight="bold" fill="#b6b6ba">C</text></svg></div>
<div class="a" style="left:406px;top:305px"><svg width="17" height="17" viewBox="0 0 17 17"><path d="M3 5.5 H10.8 L13.6 8.6 V14.6 H3 Z" fill="#e9eff9"/>
<path d="M3 5.5 V14.6 H13" fill="none" stroke="#74889f" stroke-width="1.1"/>
<path d="M10.8 5.5 L13.6 8.6" stroke="#b0bccb" stroke-width="1"/>
<rect x=".5" y="1.5" width="4.4" height="4" fill="#f7f7f7" stroke="#777" stroke-width=".7"/><path d="M1.4 3.5 H4 M2.7 2.3 V4.7" stroke="#333" stroke-width=".9"/>
<text x="5.8" y="4.9" font-family="Liberation Sans, sans-serif" font-size="7" font-weight="bold" fill="#17324f">A</text>
<text x="9" y="10.9" font-family="Liberation Sans, sans-serif" font-size="6.8" font-weight="bold" fill="#a79ba9">B</text>
<text x="12" y="15.9" font-family="Liberation Sans, sans-serif" font-size="6.4" font-weight="bold" fill="#b6b6ba">C</text></svg></div>
<div class="a" style="left:433px;top:306px"><svg width="12" height="14" viewBox="0 0 12 14"><path d="M.8 .8 H10.8 V3.2 H9.8 V2.6 H4.2 L8 7 L4.2 11.4 H9.8 V10.6 H10.8 V13.2 H.8 V12 L5.2 7 L.8 2 Z" fill="#404040"/></svg></div>
<div class="sep" style="left:452px;top:305px"></div>
<div class="a" style="left:460px;top:306px"><svg width="15" height="14" viewBox="0 0 16 15" preserveAspectRatio="none"><defs><linearGradient id="gpr2" x1="0" y1="0" x2="0" y2="1"><stop offset="0" stop-color="#efefef"/><stop offset="1" stop-color="#b9b4ad"/></linearGradient></defs>
<rect x="4" y=".8" width="8" height="5.4" fill="#fbfbfd" stroke="#a6a6ae" stroke-width=".8"/>
<rect x=".8" y="5.2" width="14.4" height="6.6" rx="1.8" fill="url(#gpr2)" stroke="#8b857c" stroke-width=".9"/>
<path d="M3 7.6 H13" stroke="#c77c6a" stroke-width="1" stroke-dasharray="1.4 .8"/>
<rect x="3.6" y="9.4" width="8.8" height="4.6" fill="#f2f2f2" stroke="#7c7670" stroke-width=".8"/>
<rect x="5" y="10.6" width="6" height="1.8" fill="#1a1a1a"/></svg></div>
<div class="a" style="left:483.5px;top:304px"><svg width="16" height="16" viewBox="0 0 16 16"><defs><linearGradient id="gpv" x1="0" y1="0" x2="1" y2="1"><stop offset="0" stop-color="#ffffff"/><stop offset="1" stop-color="#dfe8f4"/></linearGradient></defs>
<path d="M1 1.5 H8.4 L12 5 V13.8 H1 Z" fill="url(#gpv)" stroke="#8fabcb" stroke-width="1"/>
<path d="M8.4 1.5 V5 H12" fill="none" stroke="#a9bfd9" stroke-width=".8"/>
<circle cx="9.6" cy="9.8" r="2.9" fill="#d6e4f5" fill-opacity=".9" stroke="#8e8a8e" stroke-width="1.1"/>
<path d="M11.9 12 L14.2 14.6" stroke="#a5562c" stroke-width="2.1" stroke-linecap="round"/></svg></div>
<div class="a" style="left:509px;top:305px"><svg width="15" height="15" viewBox="0 0 16 16" preserveAspectRatio="none"><defs><linearGradient id="gsv" x1="0" y1="0" x2="0" y2="1"><stop offset="0" stop-color="#b9cade"/><stop offset="1" stop-color="#8ba5c4"/></linearGradient></defs>
<rect x=".6" y=".6" width="14.8" height="14.8" rx=".9" fill="url(#gsv)" stroke="#6c89ab" stroke-width="1.1"/>
<rect x="3.3" y="1.6" width="9.4" height="6" fill="#f3f7fc" stroke="#c5d5e8" stroke-width=".6"/>
<path d="M4.5 3.5 H11.5 M4.5 5.4 H11.5" stroke="#b7cae2" stroke-width=".8"/>
<rect x="4" y="10" width="8.2" height="5" fill="#e6ebf1" stroke="#6785ab" stroke-width=".6"/>
<rect x="5.3" y="11.2" width="2.2" height="3" fill="#50637f"/></svg></div>
<div class="sep" style="left:530px;top:305px"></div>
<div class="a" style="left:537.5px;top:307.5px"><svg width="15" height="11" viewBox="0 0 15 11"><defs><linearGradient id="gml" x1="0" y1="0" x2="0" y2="1"><stop offset="0" stop-color="#f9d87c"/><stop offset="1" stop-color="#f2b548"/></linearGradient></defs>
<rect x=".5" y=".5" width="14" height="10" fill="url(#gml)" stroke="#cf9a42" stroke-width="1"/>
<path d="M1 1 L7.5 6.4 L14 1" fill="none" stroke="#d79a3a" stroke-width="1"/><path d="M1 10 L5.6 5 M14 10 L9.4 5" fill="none" stroke="#e2ab4c" stroke-width=".8"/></svg></div>
<div class="a" style="left:555px;top:313px"><svg width="5" height="3" viewBox="0 0 5 3"><path d="M0 0 H5 L2.5 3 Z" fill="#4b3f12"/></svg></div>
<span class="a ut" style="left:1790px;top:307px;letter-spacing:-.05px">Все действия</span>
<div class="a" style="left:1863px;top:313px"><svg width="5" height="3" viewBox="0 0 5 3"><path d="M0 0 H5 L2.5 3 Z" fill="#4b3f12"/></svg></div>
<div class="a" style="left:1877px;top:305px"><svg width="17" height="17" viewBox="0 0 17 17"><defs><linearGradient id="ghp" x1="0" y1="0" x2="0" y2="1"><stop offset="0" stop-color="#fbe4b4"/><stop offset="1" stop-color="#f0b458"/></linearGradient></defs>
<circle cx="8.5" cy="8.5" r="7.6" fill="url(#ghp)" stroke="#c89a58" stroke-width="1"/>
<text x="8.5" y="12.6" font-family="Liberation Sans, sans-serif" font-size="11.5" font-weight="bold" text-anchor="middle" fill="#8a6a38">?</text></svg></div>

<!-- report frame -->
<div class="a" style="left:19px;top:331px;width:1877px;height:760px;border:1px solid #bdb694;background:#fff"></div>
<div class="a" style="left:20px;top:332px;width:41px;height:748px;background:linear-gradient(90deg,#fffbf0,#fffdf6)"></div>
<div class="a" style="left:61px;top:332px;width:1px;height:748px;background:#c9c3a4"></div>
<!-- scrollbar -->
<div class="a" style="left:1879px;top:332px;width:17px;height:748px;background:#fdfbf3;border-left:1px solid #b3ae96;border-right:1px solid #b3ae96"></div>
<div class="a" style="left:1880px;top:332px;width:15px;height:21px;background:linear-gradient(#fdfaf1,#f6f1e0);border-bottom:1px solid #b3ae96"><svg width="15" height="20"><path d="M4 13 L7.4 6.2 L10.8 13 Z" fill="#c6c4b6"/></svg></div>
<div class="a" style="left:1880px;top:353px;width:15px;height:42px;background:linear-gradient(90deg,#f8f2de,#ede5c3);border-bottom:1px solid #b3ae96"><div class="a" style="left:5.5px;top:19px;width:4px;height:4px;border-radius:2px;background:#d2ccb4"></div></div>

<!-- selected cell + params -->
<div class="a" style="left:62px;top:332px;width:64px;height:13px;background:#ececfb;border:1px solid #cfd0e8;border-top:none;border-left:none"></div>
<span class="hd" style="left:65px;top:346px;letter-spacing:-.42px">Параметры:</span>
<span class="hd" style="left:153px;top:346px;letter-spacing:-.08px">Период: 01.01.2019 - 31.01.2019</span>

<!-- header -->
<div class="a" style="left:62px;top:374px;width:966px;height:67px;background:#f6eecb;border-top:1px solid #d0c797"></div>
<div class="a" style="left:62px;top:391px;width:966px;height:1px;background:#d0c797"></div>
<div class="a" style="left:62px;top:416px;width:475px;height:1px;background:#d0c797"></div>
<span class="hd" style="left:65px;top:376px">Сотрудник</span>
<span class="hd" style="left:65px;top:393px">Документ</span>
<span class="hd" style="left:65px;top:418px">Номенклатура</span>
<span class="hd" style="left:541px;top:376px">По документу</span>
<span class="hd" style="left:881px;top:376px">Доля сотрудника</span>
<span class="hd" style="left:541px;top:393px">Количество<br>услуги</span>
<span class="hd" style="left:627px;top:393px">Сумма<br>без<br>скидки</span>
<span class="hd" style="left:693px;top:393px">% руч.</span>
<span class="hd" style="left:742px;top:393px">Сумма<br>скидки</span>
<span class="hd" style="left:800px;top:393px">Сумма<br>услуги</span>
<span class="hd" style="left:881px;top:393px">Процент</span>
<span class="hd" style="left:946px;top:393px">Сумма<br>сотрудника</span>

<!-- rows -->
<div class="row r0" style="top:441px;height:15px">
<span class="c0 t0" style="left:2px;letter-spacing:0.108px">Беляков Д.А.</span>
<span class="n" style="right:406.70000000000005px">49,000</span>
<span class="n" style="right:340.70000000000005px">51 960</span>
<span class="n" style="right:291.70000000000005px">0,25</span>
<span class="n" style="right:233.70000000000005px">130</span>
<span class="n" style="right:152.70000000000005px">51 830,00</span>
<span class="n" style="right:87.70000000000005px">73,11</span>
<span class="n" style="right:2.7000000000000455px">37 895,00</span>
</div>
<div class="row r1" style="top:456px;height:15px">
<span class="c0 t1" style="left:15.5px;letter-spacing:-0.035px">Заказ-наряд 00000000001 от 08.01.2019 11:55:22</span>
<span class="n" style="right:406.70000000000005px">4,850</span>
<span class="n" style="right:340.70000000000005px">4 850</span>
<span class="n" style="right:152.70000000000005px">4 850,00</span>
<span class="n" style="right:87.70000000000005px">100,00</span>
<span class="n" style="right:2.7000000000000455px">4 850,00</span>
</div>
<div class="row r2" style="top:471px;height:15px">
<span class="c0 t2" style="left:30px;letter-spacing:0.122px">Дем.-монтаж торм. колодок 1 оси (дисковые тормоза)</span>
<span class="n" style="right:406.70000000000005px">0,750</span>
<span class="n" style="right:340.70000000000005px">750</span>
<span class="n" style="right:152.70000000000005px">750,00</span>
<span class="n" style="right:87.70000000000005px">100,00</span>
<span class="n" style="right:2.7000000000000455px">750,00</span>
</div>
<div class="row r2" style="top:486px;height:15px">
<span class="c0 t2" style="left:30px;letter-spacing:0.152px">Дем.-монтаж 1 торм. диска со снятием ступицы</span>
<span class="n" style="right:406.70000000000005px">2,600</span>
<span class="n" style="right:340.70000000000005px">2 600</span>
<span class="n" style="right:152.70000000000005px">2 600,00</span>
<span class="n" style="right:87.70000000000005px">100,00</span>
<span class="n" style="right:2.7000000000000455px">2 600,00</span>
</div>
<div class="row r2" style="top:501px;height:15px">
<span class="c0 t2" style="left:30px;letter-spacing:0.127px">Дем.-монтаж сальника ступицы колеса, ступица снята</span>
<span class="n" style="right:406.70000000000005px">0,300</span>
<span class="n" style="right:340.70000000000005px">300</span>
<span class="n" style="right:152.70000000000005px">300,00</span>
<span class="n" style="right:87.70000000000005px">100,00</span>
<span class="n" style="right:2.7000000000000455px">300,00</span>
</div>
<div class="row r2" style="top:516px;height:15px">
<span class="c0 t2" style="left:30px;letter-spacing:0.15px">Дем.-монтаж подшипников ступицы колеса (ступ.снята)</span>
<span class="n" style="right:406.70000000000005px">0,800</span>
<span class="n" style="right:340.70000000000005px">800</span>
<span class="n" style="right:152.70000000000005px">800,00</span>
<span class="n" style="right:87.70000000000005px">100,00</span>
<span class="n" style="right:2.7000000000000455px">800,00</span>
</div>
<div class="row r2" style="top:531px;height:15px">
<span class="c0 t2" style="left:30px;letter-spacing:0.169px">Дем.-монтаж  полуоси</span>
<span class="n" style="right:406.70000000000005px">0,400</span>
<span class="n" style="right:340.70000000000005px">400</span>
<span class="n" style="right:152.70000000000005px">400,00</span>
<span class="n" style="right:87.70000000000005px">100,00</span>
<span class="n" style="right:2.7000000000000455px">400,00</span>
</div>
<div class="row r1" style="top:546px;height:15px">
<span class="c0 t1" style="left:15.5px;letter-spacing:-0.053px">Заказ-наряд 00000001315 от 09.01.2019 18:48:10</span>
<span class="n" style="right:406.70000000000005px">0,500</span>
<span class="n" style="right:340.70000000000005px">500</span>
<span class="n" style="right:291.70000000000005px">10,00</span>
<span class="n" style="right:233.70000000000005px">50</span>
<span class="n" style="right:152.70000000000005px">450,00</span>
<span class="n" style="right:87.70000000000005px">100,00</span>
<span class="n" style="right:2.7000000000000455px">450,00</span>
</div>
<div class="row r2" style="top:561px;height:15px">
<span class="c0 t2" style="left:30px;letter-spacing:0.111px">Дем.-монтаж 1-го отбойника</span>
<span class="n" style="right:406.70000000000005px">0,500</span>
<span class="n" style="right:340.70000000000005px">500</span>
<span class="n" style="right:291.70000000000005px">10,00</span>
<span class="n" style="right:233.70000000000005px">50</span>
<span class="n" style="right:152.70000000000005px">450,00</span>
<span class="n" style="right:87.70000000000005px">100,00</span>
<span class="n" style="right:2.7000000000000455px">450,00</span>
</div>
<div class="row r1" style="top:576px;height:15px">
<span class="c0 t1" style="left:15.5px;letter-spacing:-0.035px">Заказ-наряд 00000001326 от 11.01.2019 14:33:31</span>
<span class="n" style="right:406.70000000000005px">2,800</span>
<span class="n" style="right:340.70000000000005px">3 360</span>
<span class="n" style="right:152.70000000000005px">3 360,00</span>
<span class="n" style="right:87.70000000000005px">100,00</span>
<span class="n" style="right:2.7000000000000455px">3 360,00</span>
</div>
<div class="row r2" style="top:591px;height:15px">
<span class="c0 t2" style="left:30px;letter-spacing:0.065px">Слив, залив масла в двигателе (вкл.замену фил. элем.)</span>
<span class="n" style="right:406.70000000000005px">0,600</span>
<span class="n" style="right:340.70000000000005px">720</span>
<span class="n" style="right:152.70000000000005px">720,00</span>
<span class="n" style="right:87.70000000000005px">100,00</span>
<span class="n" style="right:2.7000000000000455px">720,00</span>
</div>
<div class="row r2" style="top:606px;height:15px">
<span class="c0 t2" style="left:30px;letter-spacing:0.133px">Дем.-монтаж топл.фильтра</span>
<span class="n" style="right:406.70000000000005px">0,600</span>
<span class="n" style="right:340.70000000000005px">720</span>
<span class="n" style="right:152.70000000000005px">720,00</span>
<span class="n" style="right:87.70000000000005px">100,00</span>
<span class="n" style="right:2.7000000000000455px">720,00</span>
</div>
<div class="row r2" style="top:621px;height:15px">
<span class="c0 t2" style="left:30px;letter-spacing:0.132px">Дем.-монтаж фильтра влагоосушителя</span>
<span class="n" style="right:406.70000000000005px">0,300</span>
<span class="n" style="right:340.70000000000005px">360</span>
<span class="n" style="right:152.70000000000005px">360,00</span>
<span class="n" style="right:87.70000000000005px">100,00</span>
<span class="n" style="right:2.7000000000000455px">360,00</span>
</div>
<div class="row r2" style="top:636px;height:29px">
<span class="c0 t2" style="left:30px;letter-spacing:0.107px;line-height:14px;top:0">Дефектовка технического состояния водяной помпы и роликов привода (вкл.<br>дем.монтаж ремней)</span>
<span class="n" style="right:406.70000000000005px">0,700</span>
<span class="n" style="right:340.70000000000005px">840</span>
<span class="n" style="right:152.70000000000005px">840,00</span>
<span class="n" style="right:87.70000000000005px">100,00</span>
<span class="n" style="right:2.7000000000000455px">840,00</span>
</div>
<div class="row r2" style="top:665px;height:15px">
<span class="c0 t2" style="left:30px;letter-spacing:0.111px">Контроль уровня масла заднего моста (вкл. долив)</span>
<span class="n" style="right:406.70000000000005px">0,300</span>
<span class="n" style="right:340.70000000000005px">360</span>
<span class="n" style="right:152.70000000000005px">360,00</span>
<span class="n" style="right:87.70000000000005px">100,00</span>
<span class="n" style="right:2.7000000000000455px">360,00</span>
</div>
<div class="row r2" style="top:680px;height:15px">
<span class="c0 t2" style="left:30px;letter-spacing:0.11px">Контроль уровня масла к.п.п. (вкл. долив)</span>
<span class="n" style="right:406.70000000000005px">0,300</span>
<span class="n" style="right:340.70000000000005px">360</span>
<span class="n" style="right:152.70000000000005px">360,00</span>
<span class="n" style="right:87.70000000000005px">100,00</span>
<span class="n" style="right:2.7000000000000455px">360,00</span>
</div>
<div class="row r1" style="top:695px;height:15px">
<span class="c0 t1" style="left:15.5px;letter-spacing:-0.035px">Заказ-наряд 00000001335 от 11.01.2019 18:33:03</span>
<span class="n" style="right:406.70000000000005px">5,600</span>
<span class="n" style="right:340.70000000000005px">6 720</span>
<span class="n" style="right:152.70000000000005px">6 720,00</span>
<span class="n" style="right:87.70000000000005px">50,00</span>
<span class="n" style="right:2.7000000000000455px">3 360,00</span>
</div>
<div class="row r2" style="top:710px;height:15px">
<span class="c0 t2" style="left:30px;letter-spacing:0.037px">Дефектовка ходовой п/прицепа (прицепа)</span>
<span class="n" style="right:406.70000000000005px">0,500</span>
<span class="n" style="right:340.70000000000005px">600</span>
<span class="n" style="right:152.70000000000005px">600,00</span>
<span class="n" style="right:87.70000000000005px">50,00</span>
<span class="n" style="right:2.7000000000000455px">300,00</span>
</div>
<div class="row r2" style="top:725px;height:15px">
<span class="c0 t2" style="left:30px;letter-spacing:0.135px">Дем.-монтаж 1 торм. диска без снятия ступицы</span>
<span class="n" style="right:406.70000000000005px">1,900</span>
<span class="n" style="right:340.70000000000005px">2 280</span>
<span class="n" style="right:152.70000000000005px">2 280,00</span>
<span class="n" style="right:87.70000000000005px">50,00</span>
<span class="n" style="right:2.7000000000000455px">1 140,00</span>
</div>
<div class="row r2" style="top:740px;height:15px">
<span class="c0 t2" style="left:30px;letter-spacing:0.076px">Дем.-монтаж пневмоподушки п/прицепа</span>
<span class="n" style="right:406.70000000000005px">0,700</span>
<span class="n" style="right:340.70000000000005px">840</span>
<span class="n" style="right:152.70000000000005px">840,00</span>
<span class="n" style="right:87.70000000000005px">50,00</span>
<span class="n" style="right:2.7000000000000455px">420,00</span>
</div>
<div class="row r2" style="top:755px;height:15px">
<span class="c0 t2" style="left:30px;letter-spacing:0.122px">Дем.-монтаж торм. колодок 1 оси (дисковые тормоза)</span>
<span class="n" style="right:406.70000000000005px">2,500</span>
<span class="n" style="right:340.70000000000005px">3 000</span>
<span class="n" style="right:152.70000000000005px">3 000,00</span>
<span class="n" style="right:87.70000000000005px">50,00</span>
<span class="n" style="right:2.7000000000000455px">1 500,00</span>
</div>
<div class="row r1" style="top:770px;height:15px">
<span class="c0 t1" style="left:15.5px;letter-spacing:-0.053px">Заказ-наряд 00000001336 от 14.01.2019 19:45:33</span>
<span class="n" style="right:406.70000000000005px">2,000</span>
<span class="n" style="right:340.70000000000005px">2 000</span>
<span class="n" style="right:152.70000000000005px">2 000,00</span>
<span class="n" style="right:87.70000000000005px">100,00</span>
<span class="n" style="right:2.7000000000000455px">2 000,00</span>
</div>
<div class="row r2" style="top:785px;height:15px">
<span class="c0 t2" style="left:30px;letter-spacing:-0.006px">Дем.-монтаж гидроцилиндра гидроборта</span>
<span class="n" style="right:406.70000000000005px">1,000</span>
<span class="n" style="right:340.70000000000005px">1 000</span>
<span class="n" style="right:152.70000000000005px">1 000,00</span>
<span class="n" style="right:87.70000000000005px">100,00</span>
<span class="n" style="right:2.7000000000000455px">1 000,00</span>
</div>
<div class="row r2" style="top:800px;height:15px">
<span class="c0 t2" style="left:30px;letter-spacing:-0.156px">Смазка пальцев  гидроборта</span>
<span class="n" style="right:406.70000000000005px">0,400</span>
<span class="n" style="right:340.70000000000005px">400</span>
<span class="n" style="right:152.70000000000005px">400,00</span>
<span class="n" style="right:87.70000000000005px">100,00</span>
<span class="n" style="right:2.7000000000000455px">400,00</span>
</div>
<div class="row r2" style="top:815px;height:15px">
<span class="c0 t2" style="left:30px;letter-spacing:0.039px">Слив/залив масла, прокачка системы гидроборта</span>
<span class="n" style="right:406.70000000000005px">0,600</span>
<span class="n" style="right:340.70000000000005px">600</span>
<span class="n" style="right:152.70000000000005px">600,00</span>
<span class="n" style="right:87.70000000000005px">100,00</span>
<span class="n" style="right:2.7000000000000455px">600,00</span>
</div>
<div class="row r1" style="top:830px;height:15px">
<span class="c0 t1" style="left:15.5px;letter-spacing:-0.053px">Заказ-наряд 00000001350 от 15.01.2019 13:44:46</span>
<span class="n" style="right:406.70000000000005px">3,100</span>
<span class="n" style="right:340.70000000000005px">3 100</span>
<span class="n" style="right:152.70000000000005px">3 100,00</span>
<span class="n" style="right:87.70000000000005px">25,00</span>
<span class="n" style="right:2.7000000000000455px">775,00</span>
</div>
<div class="row r2" style="top:845px;height:15px">
<span class="c0 t2" style="left:30px;letter-spacing:0.072px">Дем.-монтаж 1-го сайлентблока п/рессоры</span>
<span class="n" style="right:406.70000000000005px">1,500</span>
<span class="n" style="right:340.70000000000005px">1 500</span>
<span class="n" style="right:152.70000000000005px">1 500,00</span>
<span class="n" style="right:87.70000000000005px">25,00</span>
<span class="n" style="right:2.7000000000000455px">375,00</span>
</div>
<div class="row r2" style="top:860px;height:15px">
<span class="c0 t2" style="left:30px;letter-spacing:0.135px">Дем.-монтаж глушителя</span>
<span class="n" style="right:406.70000000000005px">0,900</span>
<span class="n" style="right:340.70000000000005px">900</span>
<span class="n" style="right:152.70000000000005px">900,00</span>
<span class="n" style="right:87.70000000000005px">25,00</span>
<span class="n" style="right:2.7000000000000455px">225,00</span>
</div>
<div class="row r2" style="top:875px;height:15px">
<span class="c0 t2" style="left:30px;letter-spacing:0.162px">Дем.-монтаж выхлопной трубы</span>
<span class="n" style="right:406.70000000000005px">0,700</span>
<span class="n" style="right:340.70000000000005px">700</span>
<span class="n" style="right:152.70000000000005px">700,00</span>
<span class="n" style="right:87.70000000000005px">25,00</span>
<span class="n" style="right:2.7000000000000455px">175,00</span>
</div>
<div class="row r1" style="top:890px;height:15px">
<span class="c0 t1" style="left:15.5px;letter-spacing:-0.053px">Заказ-наряд 00000001360 от 17.01.2019 19:50:36</span>
<span class="n" style="right:406.70000000000005px">4,400</span>
<span class="n" style="right:340.70000000000005px">5 280</span>
<span class="n" style="right:152.70000000000005px">5 280,00</span>
<span class="n" style="right:87.70000000000005px">100,00</span>
<span class="n" style="right:2.7000000000000455px">5 280,00</span>
</div>
<div class="row r2" style="top:905px;height:15px">
<span class="c0 t2" style="left:30px;letter-spacing:0.065px">Слив, залив масла в двигателе (вкл.замену фил. элем.)</span>
<span class="n" style="right:406.70000000000005px">0,600</span>
<span class="n" style="right:340.70000000000005px">720</span>
<span class="n" style="right:152.70000000000005px">720,00</span>
<span class="n" style="right:87.70000000000005px">100,00</span>
<span class="n" style="right:2.7000000000000455px">720,00</span>
</div>
<div class="row r2" style="top:920px;height:15px">
<span class="c0 t2" style="left:30px;letter-spacing:0.133px">Дем.-монтаж топл.фильтра</span>
<span class="n" style="right:406.70000000000005px">0,600</span>
<span class="n" style="right:340.70000000000005px">720</span>
<span class="n" style="right:152.70000000000005px">720,00</span>
<span class="n" style="right:87.70000000000005px">100,00</span>
<span class="n" style="right:2.7000000000000455px">720,00</span>
</div>
<div class="row r2" style="top:935px;height:15px">
<span class="c0 t2" style="left:30px;letter-spacing:0.139px">Дем.-монтаж водяной помпы (вкл. слив, залив охл жидкости)</span>
<span class="n" style="right:406.70000000000005px">3,200</span>
<span class="n" style="right:340.70000000000005px">3 840</span>
<span class="n" style="right:152.70000000000005px">3 840,00</span>
<span class="n" style="right:87.70000000000005px">100,00</span>
<span class="n" style="right:2.7000000000000455px">3 840,00</span>
</div>
<div class="row r1" style="top:950px;height:15px">
<span class="c0 t1" style="left:15.5px;letter-spacing:-0.053px">Заказ-наряд 00000001362 от 18.01.2019 14:37:34</span>
<span class="n" style="right:406.70000000000005px">2,000</span>
<span class="n" style="right:340.70000000000005px">2 400</span>
<span class="n" style="right:152.70000000000005px">2 400,00</span>
<span class="n" style="right:87.70000000000005px">100,00</span>
<span class="n" style="right:2.7000000000000455px">2 400,00</span>
</div>
<div class="row r2" style="top:965px;height:15px">
<span class="c0 t2" style="left:30px;letter-spacing:0.144px">Дем.-монтаж пневмоподушки</span>
<span class="n" style="right:406.70000000000005px">1,000</span>
<span class="n" style="right:340.70000000000005px">1 200</span>
<span class="n" style="right:152.70000000000005px">1 200,00</span>
<span class="n" style="right:87.70000000000005px">100,00</span>
<span class="n" style="right:2.7000000000000455px">1 200,00</span>
</div>
<div class="row r2" style="top:980px;height:15px">
<span class="c0 t2" style="left:30px;letter-spacing:0.122px">Дем.-монтаж торм. колодок 1 оси (дисковые тормоза)</span>
<span class="n" style="right:406.70000000000005px">1,000</span>
<span class="n" style="right:340.70000000000005px">1 200</span>
<span class="n" style="right:152.70000000000005px">1 200,00</span>
<span class="n" style="right:87.70000000000005px">100,00</span>
<span class="n" style="right:2.7000000000000455px">1 200,00</span>
</div>
<div class="row r1" style="top:995px;height:15px">
<span class="c0 t1" style="left:15.5px;letter-spacing:-0.053px">Заказ-наряд 00000001408 от 25.01.2019 17:57:54</span>
<span class="n" style="right:406.70000000000005px">0,800</span>
<span class="n" style="right:340.70000000000005px">800</span>
<span class="n" style="right:291.70000000000005px">10,00</span>
<span class="n" style="right:233.70000000000005px">80</span>
<span class="n" style="right:152.70000000000005px">720,00</span>
<span class="n" style="right:87.70000000000005px">100,00</span>
<span class="n" style="right:2.7000000000000455px">720,00</span>
</div>
<div class="row r2" style="top:1010px;height:15px">
<span class="c0 t2" style="left:30px;letter-spacing:-0.079px">Смазка седелки</span>
<span class="n" style="right:406.70000000000005px">0,200</span>
<span class="n" style="right:340.70000000000005px">200</span>
<span class="n" style="right:291.70000000000005px">10,00</span>
<span class="n" style="right:233.70000000000005px">20</span>
<span class="n" style="right:152.70000000000005px">180,00</span>
<span class="n" style="right:87.70000000000005px">100,00</span>
<span class="n" style="right:2.7000000000000455px">180,00</span>
</div>
<div class="row r2" style="top:1025px;height:15px">
<span class="c0 t2" style="left:30px;letter-spacing:0.106px">Дем.-монтаж топливозаборника</span>
<span class="n" style="right:406.70000000000005px">0,400</span>
<span class="n" style="right:340.70000000000005px">400</span>
<span class="n" style="right:291.70000000000005px">10,00</span>
<span class="n" style="right:233.70000000000005px">40</span>
<span class="n" style="right:152.70000000000005px">360,00</span>
<span class="n" style="right:87.70000000000005px">100,00</span>
<span class="n" style="right:2.7000000000000455px">360,00</span>
</div>
<div class="row r2" style="top:1040px;height:15px">
<span class="c0 t2" style="left:30px;letter-spacing:0.044px">Слив, залив топлива</span>
<span class="n" style="right:406.70000000000005px">0,200</span>
<span class="n" style="right:340.70000000000005px">200</span>
<span class="n" style="right:291.70000000000005px">10,00</span>
<span class="n" style="right:233.70000000000005px">20</span>
<span class="n" style="right:152.70000000000005px">180,00</span>
<span class="n" style="right:87.70000000000005px">100,00</span>
<span class="n" style="right:2.7000000000000455px">180,00</span>
</div>
<div class="row r1" style="top:1055px;height:15px">
<span class="c0 t1" style="left:15.5px;letter-spacing:-0.053px">Заказ-наряд 00000001419 от 30.01.2019 16:00:36</span>
<span class="n" style="right:406.70000000000005px">1,800</span>
<span class="n" style="right:340.70000000000005px">1 800</span>
<span class="n" style="right:152.70000000000005px">1 800,00</span>
<span class="n" style="right:87.70000000000005px">100,00</span>
<span class="n" style="right:2.7000000000000455px">1 800,00</span>
</div>
<div class="row r2" style="top:1070px;height:15px">
<span class="c0 t2" style="left:30px;letter-spacing:0.065px">Слив, залив масла в двигателе (вкл.замену фил. элем.)</span>
<span class="n" style="right:406.70000000000005px">0,600</span>
<span class="n" style="right:340.70000000000005px">600</span>
<span class="n" style="right:152.70000000000005px">600,00</span>
<span class="n" style="right:87.70000000000005px">100,00</span>
<span class="n" style="right:2.7000000000000455px">600,00</span>
</div>

<!-- column lines -->
<div class="cv" style="left:537px;height:705px"></div>
<div class="cv" style="left:623px;top:392px;height:688px"></div>
<div class="cv" style="left:689px;top:392px;height:688px"></div>
<div class="cv" style="left:738px;top:392px;height:688px"></div>
<div class="cv" style="left:796px;top:392px;height:688px"></div>
<div class="cv" style="left:877px;height:705px"></div>
<div class="cv" style="left:942px;top:392px;height:688px"></div>
<div class="cv" style="left:1027px;height:705px"></div>
<!-- frozen header line -->
<div class="a" style="left:20px;top:440px;width:1859px;height:1px;background:#b9b18c"></div>

<!-- tree -->
<div class="bx" style="left:23px;top:333px"></div>
<div class="vl" style="left:28px;top:344px;height:17px"></div>
<div class="hl" style="left:28px;top:361px;width:5px"></div>
<div class="bx" style="left:23px;top:443px"></div>
<div class="bx" style="left:36px;top:458px"></div>
<div class="bx" style="left:36px;top:548px"></div>
<div class="bx" style="left:36px;top:578px"></div>
<div class="bx" style="left:36px;top:697px"></div>
<div class="bx" style="left:36px;top:772px"></div>
<div class="bx" style="left:36px;top:832px"></div>
<div class="bx" style="left:36px;top:892px"></div>
<div class="bx" style="left:36px;top:952px"></div>
<div class="bx" style="left:36px;top:997px"></div>
<div class="bx" style="left:36px;top:1057px"></div>
<div class="vl" style="left:28px;top:454px;height:626px"></div>
<div class="vl" style="left:41px;top:469px;height:76px"></div>
<div class="hl" style="left:41px;top:545px;width:5px"></div>
<div class="vl" style="left:41px;top:559px;height:16px"></div>
<div class="hl" style="left:41px;top:575px;width:5px"></div>
<div class="vl" style="left:41px;top:589px;height:105px"></div>
<div class="hl" style="left:41px;top:694px;width:5px"></div>
<div class="vl" style="left:41px;top:708px;height:61px"></div>
<div class="hl" style="left:41px;top:769px;width:5px"></div>
<div class="vl" style="left:41px;top:783px;height:46px"></div>
<div class="hl" style="left:41px;top:829px;width:5px"></div>
<div class="vl" style="left:41px;top:843px;height:46px"></div>
<div class="hl" style="left:41px;top:889px;width:5px"></div>
<div class="vl" style="left:41px;top:903px;height:46px"></div>
<div class="hl" style="left:41px;top:949px;width:5px"></div>
<div class="vl" style="left:41px;top:963px;height:31px"></div>
<div class="hl" style="left:41px;top:994px;width:5px"></div>
<div class="vl" style="left:41px;top:1008px;height:46px"></div>
<div class="hl" style="left:41px;top:1054px;width:5px"></div>
<div class="vl" style="left:41px;top:1068px;height:21px"></div>

</div></body></html>
